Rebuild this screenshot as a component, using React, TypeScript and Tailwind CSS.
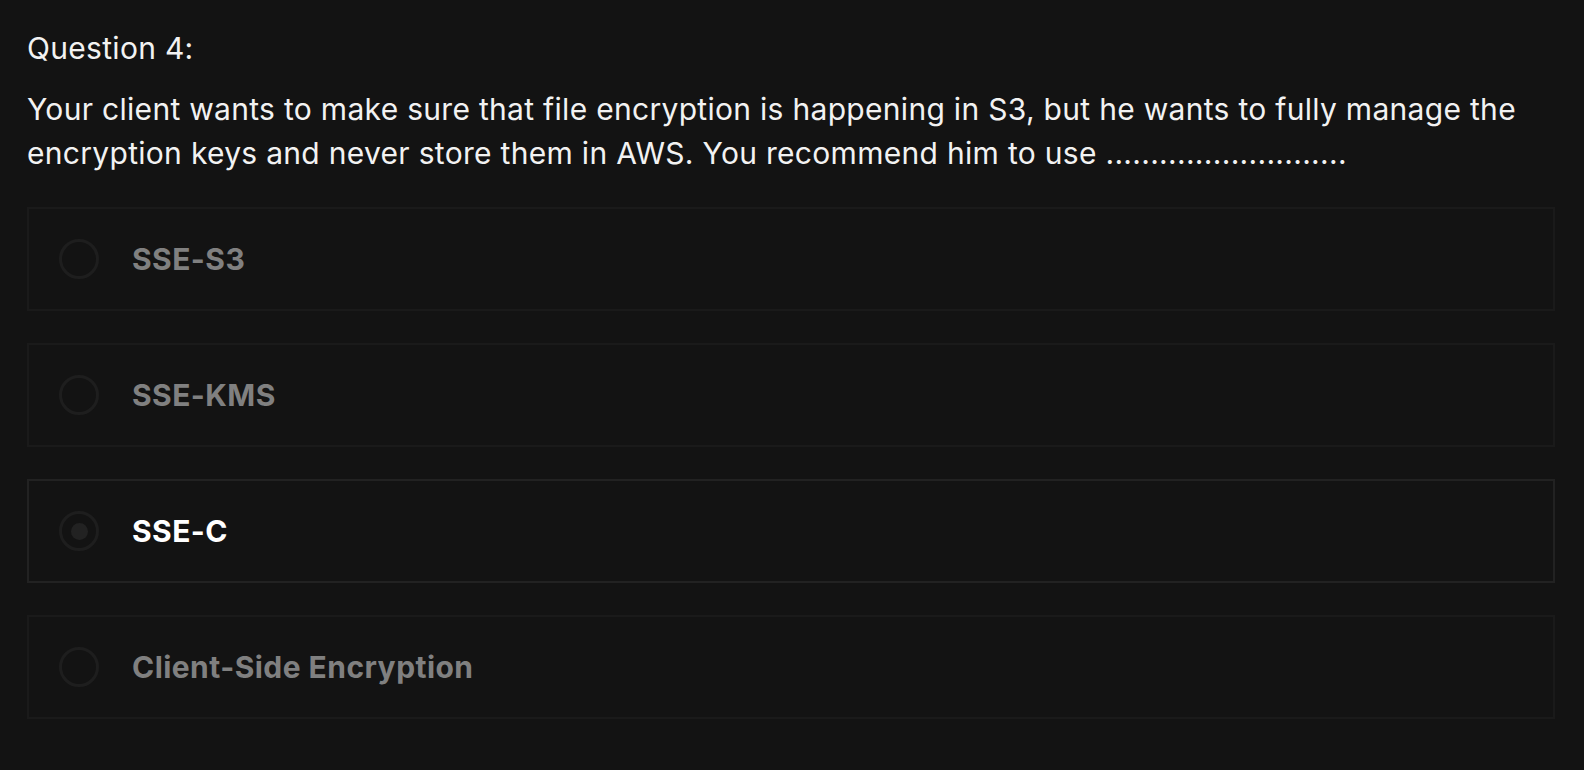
import React from "react";

const options = [
  { label: "SSE-S3", selected: false },
  { label: "SSE-KMS", selected: false },
  { label: "SSE-C", selected: true },
  { label: "Client-Side Encryption", selected: false },
];

export default function App() {
  return (
    <div
      className="min-h-[770px] w-full bg-[#131313] pl-[27px] pr-[29px] pt-[26px] text-[#f2f2f2]"
      style={{ fontFamily: "Inter, 'Noto Sans', sans-serif" }}
    >
      <div className="text-[30px] leading-[44px] tracking-[0.3px]">Question 4:</div>
      <p className="mt-[17px] text-[30px] leading-[44px] tracking-[0.3px]">
        Your client wants to make sure that file encryption is happening in S3, but he wants to fully manage the
        encryption keys and never store them in AWS. You recommend him to use ...........................
      </p>
      <div className="mt-[32px] flex flex-col gap-[32px]">
        {options.map((o) => (
          <div
            key={o.label}
            className={`flex h-[104px] items-center border-2 pl-[30px] ${
              o.selected ? "border-[#222222]" : "border-[#1a1a1a]"
            }`}
          >
            <div className="flex h-[40px] w-[40px] items-center justify-center rounded-full border-[3px] border-[#1e1e1e]">
              {o.selected && <div className="h-[17px] w-[17px] rounded-full bg-[#222222]" />}
            </div>
            <span
              className={`ml-[33px] text-[30px] font-bold tracking-[0.45px] ${
                o.selected ? "text-white" : "text-[#808080]"
              }`}
            >
              {o.label}
            </span>
          </div>
        ))}
      </div>
    </div>
  );
}
